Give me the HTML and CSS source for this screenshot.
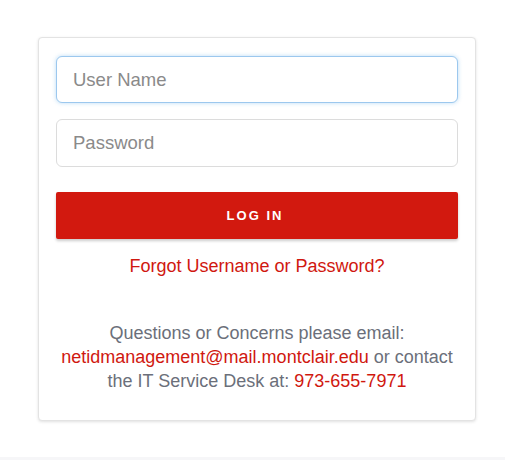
FILE: index.html
```html
<!DOCTYPE html>
<html>
<head>
<meta charset="utf-8">
<link rel="stylesheet" href="styles.css">
</head>
<body>
<div class="page">
  <div class="card">
    <form class="form">
      <input class="field focused" type="text" placeholder="User Name">
      <input class="field" type="password" placeholder="Password">
      <button class="btn" type="button">LOG IN</button>
    </form>
    <a class="forgot" href="#">Forgot Username or Password?</a>
    <p class="help">Questions or Concerns please email: <a class="red" href="#">netidmanagement@mail.montclair.edu</a> or contact the IT Service Desk at: <span class="red">973-655-7971</span></p>
  </div>
</div>
<div class="footer-band"></div>
</body>
</html>
```
FILE: styles.css
```css
html, body {
  margin: 0;
  padding: 0;
  background: #ffffff;
  font-family: "Liberation Sans", Arial, sans-serif;
}
.page {
  height: 457px;
  padding-top: 37px;
  padding-left: 38px;
  box-sizing: border-box;
}
.card {
  width: 438px;
  height: 384px;
  box-sizing: border-box;
  border: 1px solid #e3e3e3;
  border-radius: 4px;
  box-shadow: 0 1px 3px rgba(0,0,0,0.12);
  padding: 18px 17px 0 17px;
  background: #fff;
}
.form {
  display: flex;
  flex-direction: column;
  margin: 0;
}
.field {
  height: 47px;
  box-sizing: border-box;
  border: 1px solid #dcdcdc;
  border-radius: 6px;
  padding: 0 16px;
  font-family: "Liberation Sans", Arial, sans-serif;
  font-size: 18.5px;
  color: #333;
  outline: none;
  margin-bottom: 16px;
}
.field + .field {
  height: 48px;
  margin-bottom: 25px;
}
.field::placeholder {
  color: #8a8a8a;
}
.field.focused {
  border-color: #9cc8ee;
  box-shadow: 0 0 4px rgba(102,175,233,0.45);
}
.btn {
  height: 47px;
  border: none;
  border-radius: 2px;
  background: #d2190f;
  color: #fff;
  font-family: "Liberation Sans", Arial, sans-serif;
  font-weight: bold;
  font-size: 13px;
  letter-spacing: 2px;
  padding-left: 2px;
  box-shadow: 0 2px 3px rgba(0,0,0,0.2);
  cursor: pointer;
}
.forgot {
  display: block;
  text-align: center;
  margin-top: 17px;
  font-size: 18px;
  line-height: 20px;
  color: #d0180f;
  text-decoration: none;
}
.help {
  margin: 45px 0 0 0;
  text-align: center;
  font-size: 18px;
  line-height: 24px;
  color: #6b6f7a;
}
.red {
  color: #d0180f;
  text-decoration: none;
}
.footer-band {
  height: 3px;
  background: #f6f6f8;
}
```
